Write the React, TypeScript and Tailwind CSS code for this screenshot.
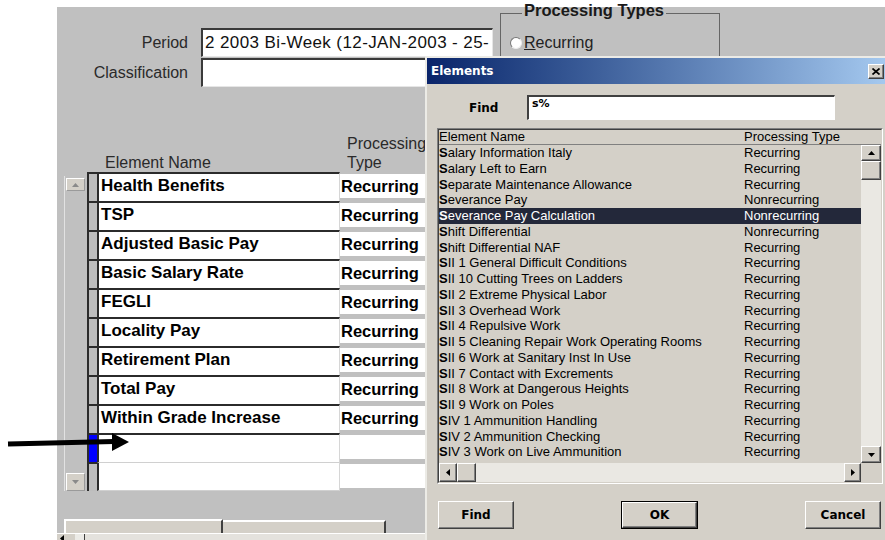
const gridRows = [
  'Health Benefits',
  'TSP',
  'Adjusted Basic Pay',
  'Basic Salary Rate',
  'FEGLI',
  'Locality Pay',
  'Retirement Plan',
  'Total Pay',
  'Within Grade Increase',
];

const elementRows: [string, string][] = [
  ['Salary Information Italy', 'Recurring'],
  ['Salary Left to Earn', 'Recurring'],
  ['Separate Maintenance Allowance', 'Recurring'],
  ['Severance Pay', 'Nonrecurring'],
  ['Severance Pay Calculation', 'Nonrecurring'],
  ['Shift Differential', 'Nonrecurring'],
  ['Shift Differential NAF', 'Recurring'],
  ['SII 1 General Difficult Conditions', 'Recurring'],
  ['SII 10 Cutting Trees on Ladders', 'Recurring'],
  ['SII 2 Extreme Physical Labor', 'Recurring'],
  ['SII 3 Overhead Work', 'Recurring'],
  ['SII 4 Repulsive Work', 'Recurring'],
  ['SII 5 Cleaning Repair Work Operating Rooms', 'Recurring'],
  ['SII 6 Work at Sanitary Inst In Use', 'Recurring'],
  ['SII 7 Contact with Excrements', 'Recurring'],
  ['SII 8 Work at Dangerous Heights', 'Recurring'],
  ['SII 9 Work on Poles', 'Recurring'],
  ['SIV 1 Ammunition Handling', 'Recurring'],
  ['SIV 2 Ammunition Checking', 'Recurring'],
  ['SIV 3 Work on Live Ammunition', 'Recurring'],
  ['SIV 4 Storage of Ammunition', 'Recurring'],
];

const SELECTED = 4;

// classic raised 3d look
const raised =
  'bg-[#d4d0c8] border border-t-white border-l-white border-r-[#404040] border-b-[#404040] shadow-[inset_-1px_-1px_#808080]';

function Arrow({ dir, color = '#000' }: { dir: 'up' | 'down' | 'left' | 'right'; color?: string }) {
  const pts = {
    up: '0,4 3.5,0 7,4',
    down: '0,0 3.5,4 7,0',
    left: '4,0 0,3.5 4,7',
    right: '0,0 4,3.5 0,7',
  }[dir];
  const horiz = dir === 'left' || dir === 'right';
  return (
    <svg width={horiz ? 4 : 7} height={horiz ? 7 : 4} viewBox={horiz ? '0 0 4 7' : '0 0 7 4'}>
      <polygon points={pts} fill={color} />
    </svg>
  );
}

function Field({ label, value }: { label: string; value?: string }) {
  return (
    <div className="flex items-center h-[29px]">
      <span className="w-[131px] text-right text-[16px] text-[#2a2a2a]">{label}</span>
      <div className="ml-[13px] w-[292px] h-[29px] bg-white border-t-2 border-l-2 border-t-[#3a3a3a] border-l-[#3a3a3a] border-b border-r border-b-[#e6e6e6] border-r-[#e6e6e6] pl-[2px] text-[17px] tracking-[0.4px] leading-[25px] whitespace-nowrap overflow-hidden text-[#111]">
        {value}
      </div>
    </div>
  );
}

function ProcessingTypes() {
  return (
    <div className="ml-[7px] -mt-[5px] w-[220px] flex flex-col">
      <div className="flex h-[16px] leading-[16px]">
        <div className="w-[22px] mt-[11px] border-t border-l border-[#666]" />
        <span className="px-[2px] text-[16.5px] font-bold text-[#1a1a1a]">Processing Types</span>
        <div className="flex-1 mt-[11px] border-t border-r border-[#666]" />
      </div>
      <div className="h-[52px] border-l border-r border-[#666] pt-[17px] pl-[9px] flex items-start">
        <div className="flex items-center h-[16px]">
          <div className="w-[12px] h-[12px] rounded-full bg-white border border-t-[#777] border-l-[#777] border-b-[#eee] border-r-[#eee]" />
          <span className="ml-[2px] inline-block text-[16px] leading-[16px] text-[#222] first-letter:underline">Recurring</span>
        </div>
      </div>
    </div>
  );
}

function GridRow({ name, current, last }: { name?: string; current?: boolean; last?: boolean }) {
  return (
    <div className="flex h-[29px]">
      <div
        className={
          'w-[10px] border-l-2 border-t-2 border-[#2b2b2b] ' + (current ? 'bg-[#0000ff]' : 'bg-[#bdbdbd]')
        }
      />
      <div
        className={
          'w-[243px] bg-white border-l-2 border-l-[#2b2b2b] border-r border-r-[#d6d6d6] pl-[2px] text-[17px] font-bold leading-[24px] text-black whitespace-nowrap ' +
          (last ? 'border-t border-t-[#d0d0d0] border-b border-b-[#d0d0d0]' : 'border-t-2 border-t-[#2b2b2b]')
        }
      >
        {name}
      </div>
      <div className="w-[85px] bg-white border-t-2 border-b-[3px] border-[#c0c0c0] pl-[1px] text-[16.5px] font-bold leading-[24px] text-black whitespace-nowrap overflow-hidden">
        {name ? 'Recurring' : ''}
      </div>
    </div>
  );
}

function ElementsDialog() {
  return (
    <div className="absolute left-[425px] top-[56px] w-[464px] h-[486px] bg-[#d4d0c8] border-t-2 border-l-2 border-[#ecebe6] flex flex-col font-['DejaVu_Sans',Verdana,sans-serif]">
      {/* title bar */}
      <div className="h-[26px] flex items-center justify-between pl-[4px] pr-[5px] bg-linear-to-r from-[#0a246a] to-[#a6caf0]">
        <span className="text-[12px] font-bold text-white">Elements</span>
        <div className={'w-[16px] h-[15px] flex items-center justify-center ' + raised}>
          <svg width="8" height="7" viewBox="0 0 8 7">
            <path d="M0.5 0.5 L7.5 6.5 M7.5 0.5 L0.5 6.5" stroke="#000" strokeWidth="1.7" />
          </svg>
        </div>
      </div>

      {/* find row */}
      <div className="mt-[11px] flex items-center h-[25px]">
        <span className="ml-[42px] w-[58px] text-[12px] font-bold text-black">Find</span>
        <div className="w-[308px] h-[25px] bg-white border-t-2 border-l-2 border-t-[#404040] border-l-[#404040] border-b border-r border-b-white border-r-white pl-[3px] text-[11px] font-bold leading-[14px] text-black">
          s%
        </div>
      </div>

      {/* element list */}
      <div className="ml-[10px] mt-[8px] w-[446px] h-[356px] flex border border-t-[#808080] border-l-[#808080] border-r-white border-b-white">
        <div className="flex-1 flex flex-col border border-t-[#404040] border-l-[#404040] border-r-[#d4d0c8] border-b-[#d4d0c8] font-['Liberation_Sans',Arial,sans-serif] text-[13px] text-black">
          <div className="flex h-[15px] leading-[14px] border-b border-[#808080] overflow-hidden">
            <span className="w-[305px]">Element Name</span>
            <span>Processing Type</span>
          </div>
          <div className="flex h-[318px]">
            <div className="flex-1 overflow-hidden">
              {elementRows.map(([name, type], i) => (
                <div
                  key={name}
                  className={
                    'flex h-[15.75px] leading-[15.75px] whitespace-nowrap ' +
                    (i === SELECTED ? 'bg-[#23283a] text-white' : '')
                  }
                >
                  <span className="w-[305px]">
                    <b>{name[0]}</b>
                    {name.slice(1)}
                  </span>
                  <span>{type}</span>
                </div>
              ))}
            </div>
            <div className="w-[20px] flex flex-col bg-[#eae8e3]">
              <div className={'h-[16px] flex items-center justify-center ' + raised}>
                <Arrow dir="up" />
              </div>
              <div className={'h-[19px] ' + raised} />
              <div className="flex-1" />
              <div className={'h-[17px] flex items-center justify-center ' + raised}>
                <Arrow dir="down" />
              </div>
            </div>
          </div>
          <div className="flex h-[19px]">
            <div className="flex-1 flex bg-[#eae8e3]">
              <div className={'w-[18px] flex items-center justify-center ' + raised}>
                <Arrow dir="left" />
              </div>
              <div className={'w-[19px] ' + raised} />
              <div className="flex-1" />
              <div className={'w-[17px] flex items-center justify-center ' + raised}>
                <Arrow dir="right" />
              </div>
            </div>
            <div className="w-[20px] bg-[#d4d0c8]" />
          </div>
        </div>
      </div>

      {/* buttons */}
      <div className="mt-[17px] ml-[11px] w-[443px] h-[28px] flex justify-between text-[12px] font-bold text-black">
        <div className={'w-[76px] flex items-center justify-center ' + raised}>Find</div>
        <div className="w-[77px] border border-black flex">
          <div className={'flex-1 flex items-center justify-center ' + raised}>OK</div>
        </div>
        <div className={'w-[76px] flex items-center justify-center ' + raised}>Cancel</div>
      </div>
    </div>
  );
}

export default function App() {
  return (
    <div className="relative w-[885px] h-[540px] overflow-hidden bg-white font-['Liberation_Sans',Arial,sans-serif]">
      <div className="ml-[57px] mt-[7px] h-[533px] bg-[#c0c0c0] flex flex-col">
        {/* header fields */}
        <div className="flex h-[80px]">
          <div className="flex flex-col gap-[1px] pt-[21px]">
            <Field label="Period" value="2 2003 Bi-Week (12-JAN-2003 - 25-" />
            <Field label="Classification" />
          </div>
          <ProcessingTypes />
        </div>

        {/* element entries block */}
        <div className="mt-[47px] pl-[7px] flex">
          <div className="w-[23px] mt-[42px] h-[315px] flex flex-col border-l border-[#e2e2e2] pl-[1px] pr-[2px] pt-[2px]">
            <div className="h-[13px] flex items-center justify-center bg-[#d4d0c8] border border-t-white border-l-white border-r-[#9a9a9a] border-b-[#9a9a9a]">
              <Arrow dir="up" color="#8a8a8a" />
            </div>
            <div className="flex-1" />
            <div className="h-[18px] flex items-center justify-center bg-[#d4d0c8] border border-t-white border-l-white border-r-[#9a9a9a] border-b-[#9a9a9a]">
              <Arrow dir="down" color="#8a8a8a" />
            </div>
          </div>
          <div className="flex flex-col">
            <div className="flex h-[38px] text-[16px] leading-[19px] text-[#2a2a2a]">
              <div className="w-[10px]" />
              <div className="w-[243px] flex items-end pl-[8px]">Element Name</div>
              <div className="w-[85px] pl-[7px] whitespace-nowrap overflow-hidden">
                Processing
                <br />
                Type
              </div>
            </div>
            {gridRows.map((name) => (
              <GridRow key={name} name={name} />
            ))}
            <GridRow current />
            <GridRow last />
          </div>
        </div>

        {/* tab strip */}
        <div className="mt-[28px] pl-[7px] flex items-end h-[14px]">
          <div className="w-[159px] h-[14px] bg-[#d4d0c8] border-t-2 border-l-2 border-t-white border-l-white border-r-2 border-r-[#404040] overflow-hidden pl-[25px] pt-[11px] text-[15px] leading-[16px] text-black">
            Entry Values
          </div>
          <div className="w-[163px] h-[13px] bg-[#d4d0c8] border-t-2 border-t-white border-r-2 border-r-[#404040] overflow-hidden pl-[35px] pt-[10px] text-[15px] leading-[16px] text-black">
            Latest Balances
          </div>
        </div>
        <div className="h-[7px] flex bg-[#e4e2dd] border-t border-white">
          <div className="w-[18px] pl-[3px] pt-[1px] bg-[#d4d0c8]">
            <Arrow dir="left" />
          </div>
          <div className="w-[10px] bg-[#ecebe7] border-r border-[#404040]" />
        </div>
      </div>

      <ElementsDialog />

      {/* pointer arrow */}
      <svg className="absolute left-0 top-0" width="140" height="460" viewBox="0 0 140 460">
        <line x1="8" y1="444" x2="114" y2="441.5" stroke="#000" strokeWidth="5" />
        <polygon points="112,433 129,442 112,451" fill="#000" />
      </svg>
    </div>
  );
}
